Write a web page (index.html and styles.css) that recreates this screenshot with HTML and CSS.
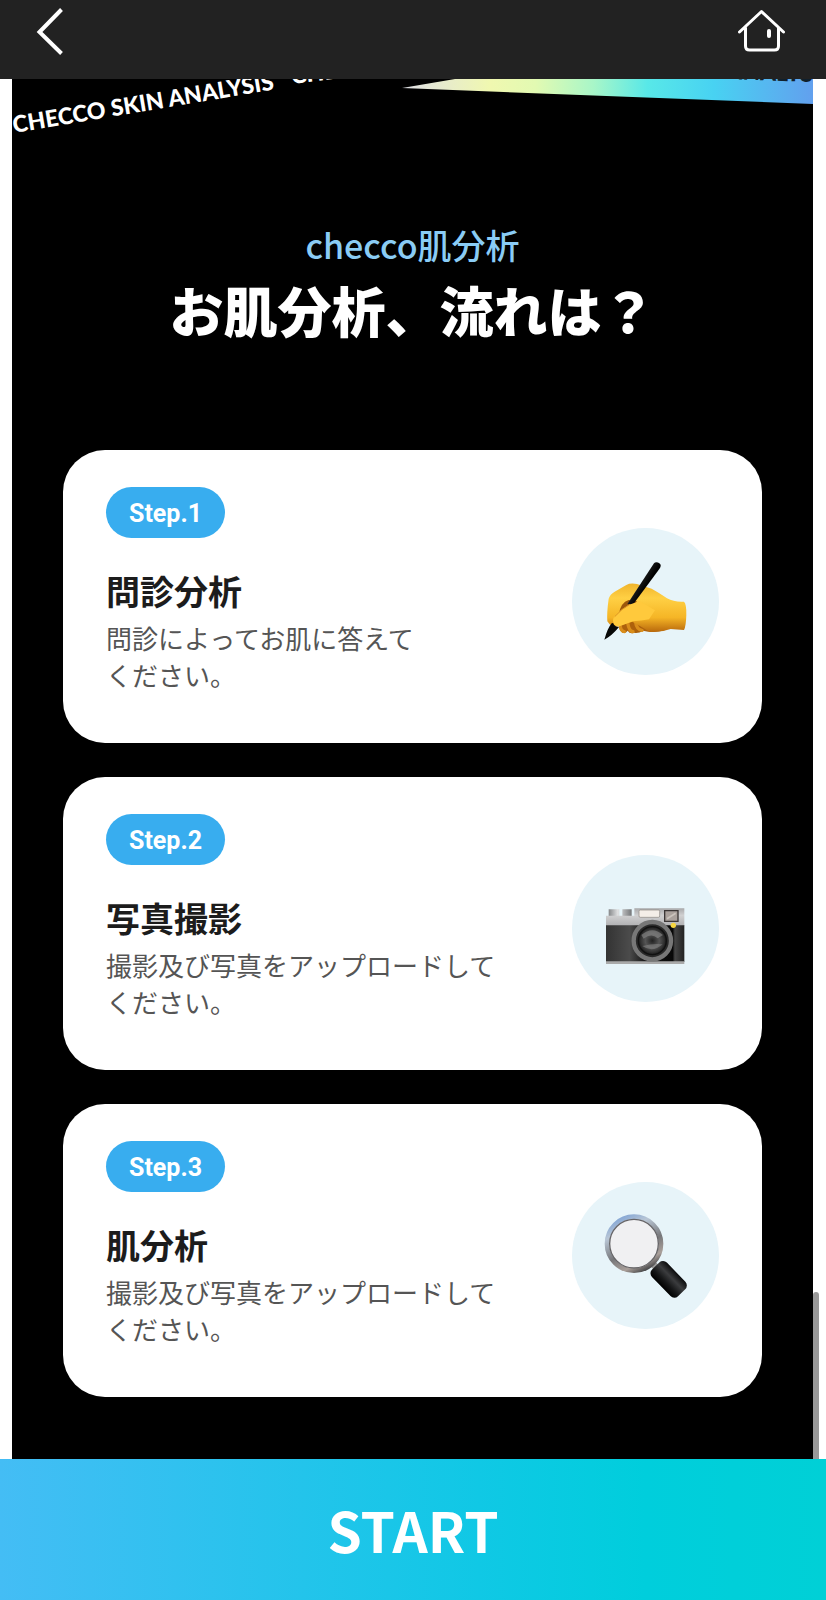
FILE: index.html
```html
<!DOCTYPE html>
<html lang="ja">
<head>
<meta charset="utf-8">
<meta name="viewport" content="width=device-width, initial-scale=1">
<title>checco肌分析</title>
<link rel="stylesheet" href="styles.css">
</head>
<body>
<header class="topbar">
  <button class="icon-button" type="button" aria-label="戻る">
    <svg width="28" height="50" viewBox="0 0 28 50" fill="none" stroke="#fff" stroke-width="4"><path d="M25.500 3.500 3.500 26 25.500 47.500"/></svg>
  </button>
  <a class="icon-button" href="#" aria-label="ホーム">
    <svg width="50" height="50" viewBox="0 0 50 50" fill="none" stroke="#fff" stroke-width="3" stroke-linecap="round" stroke-linejoin="round"><path d="M3.500 26 25.500 5.500 47.500 26M9.500 22v18q0 4 4 4h25q4 0 4-4V22"/><path d="M33 25v5" stroke-width="4"/></svg>
  </a>
</header>

<main class="content">
  <section class="panel">
    <svg class="ribbons" viewBox="0 0 801 60" aria-hidden="true">
      <defs>
        <linearGradient id="band" x1="387" x2="801" y1="0" y2="0" gradientUnits="userSpaceOnUse">
          <stop offset="0" stop-color="#dedee8"/><stop offset=".22" stop-color="#f0f8b0"/><stop offset=".33" stop-color="#e2fab2"/><stop offset=".47" stop-color="#a8f6c8"/><stop offset=".6" stop-color="#58e8e8"/><stop offset=".76" stop-color="#48d2f2"/><stop offset="1" stop-color="#62a0ee"/>
        </linearGradient>
      </defs>
      <path d="M390 9 443 0H801V25Z" fill="url(#band)"/>
      <text class="ribbon-text" fill="#fff" transform="translate(2 54) rotate(-9.500)">CHECCO SKIN ANALYSIS</text>
      <text class="ribbon-text" fill="#fff" transform="translate(280 5) rotate(-7)">CHECCO</text>
      <text class="ribbon-text" fill="#10202c" transform="translate(714 0) rotate(2)">ANALYSIS</text>
    </svg>

    <div class="intro">
      <p class="eyebrow">checco肌分析</p>
      <h1 class="headline">お肌分析、流れは？</h1>
    </div>

    <ol class="steps">
      <li class="card">
        <div class="card-body">
          <span class="badge">Step.1</span>
          <h2 class="card-title">問診分析</h2>
          <p class="card-text">問診によってお肌に答えて<br>ください。</p>
        </div>
        <svg class="picture" viewBox="37 23 441 441" aria-hidden="true">
          <defs>
            <linearGradient id="skin" x1="0" y1="0" x2="0" y2="1"><stop offset="0" stop-color="#f0b42c"/><stop offset=".3" stop-color="#ffd044"/><stop offset=".7" stop-color="#f5b526"/><stop offset="1" stop-color="#b8680c"/></linearGradient>
            <linearGradient id="pen" x1="220" y1="210" x2="245" y2="225" gradientUnits="userSpaceOnUse"><stop offset="0" stop-color="#555"/><stop offset=".35" stop-color="#151515"/><stop offset="1" stop-color="#000"/></linearGradient>
          </defs>
          <path d="M180 290Q172 326 188 337 197 341 204 331 211 342 223 337 236 340 250 331 282 340 315 330L290 280Z" fill="#ad610c"/>
          <path d="M181 315Q184 334 194 334M204 307Q208 333 220 334M227 303Q231 329 247 330" fill="none" stroke="#d98d1a" stroke-width="10" stroke-linecap="round"/>
          <path d="M143 303Q141 278 147 235 151 222 165 214L200 194Q212 187 232 191L276 205Q300 218 322 234 344 246 373 244 381 252 380 284 379 318 373 329 352 327 333 326 303 337 270 335 246 319 218 304L175 318Q155 322 143 303Z" fill="url(#skin)"/>
          <path d="M178 280Q183 247 207 239L232 243 211 268 176 285Z" fill="#9c570c"/>
          <path d="M283 129Q289 122 301 130 306 136 299 146L223 249Q216 254 203 251Z" fill="url(#pen)"/>
          <path d="M208 253Q182 268 165 287 155 300 164 313 172 321 188 315L220 303Q246 302 268 297L286 270 240 243Z" fill="#ffc93c"/>
          <path d="M165 289Q187 264 211 252" stroke="#dc9420" stroke-width="3" fill="none"/>
          <path d="M156 309Q144 323 134 358 156 347 178 320 165 320 160 308Z" fill="#080808"/>
        </svg>
      </li>
      <li class="card">
        <div class="card-body">
          <span class="badge">Step.2</span>
          <h2 class="card-title">写真撮影</h2>
          <p class="card-text">撮影及び写真をアップロードして<br>ください。</p>
        </div>
        <svg class="picture" viewBox="37 27 441 441" aria-hidden="true">
          <defs>
            <linearGradient id="silver" x1="0" y1="0" x2="0" y2="1"><stop offset="0" stop-color="#a9a9ab"/><stop offset=".4" stop-color="#d0d0d1"/><stop offset="1" stop-color="#b0b0b2"/></linearGradient>
            <linearGradient id="knob" x1="0" y1="0" x2="1" y2="0"><stop offset="0" stop-color="#858789"/><stop offset=".4" stop-color="#e0e1e2"/><stop offset="1" stop-color="#747678"/></linearGradient>
            <linearGradient id="leather" x1="0" y1="0" x2="1" y2="0"><stop offset="0" stop-color="#333"/><stop offset=".3" stop-color="#4b4b4b"/><stop offset=".5" stop-color="#151515"/><stop offset=".85" stop-color="#080808"/><stop offset=".88" stop-color="#454545"/><stop offset="1" stop-color="#222"/></linearGradient>
            <radialGradient id="lens"><stop offset="0" stop-color="#222"/><stop offset=".5" stop-color="#555"/><stop offset=".8" stop-color="#353535"/><stop offset="1" stop-color="#1b1b1b"/></radialGradient>
          </defs>
          <path d="M147 190h32v20h-32zM188 190h28v20h-28z" fill="url(#knob)"/>
          <path d="M139 209H224V187H374V240H139Z" fill="url(#silver)"/>
          <path d="M139 238H374V348H139Z" fill="url(#leather)"/>
          <path d="M139 346H374V354H139Z" fill="#aaa"/>
          <rect x="238" y="192" width="62" height="22" rx="4" fill="#f4eee8" stroke="#8b8580" stroke-width="2"/>
          <path d="M315 194h40v32h-40z" fill="#aaa19c" stroke="#3b3635" stroke-width="4"/>
          <path d="M322 218 348 202" stroke="#cbc4bd" stroke-width="5"/>
          <circle cx="278" cy="284" r="56" fill="#292929" stroke="#777" stroke-width="13"/>
          <circle cx="278" cy="284" r="42" fill="url(#lens)" stroke="#111" stroke-width="4"/>
          <path d="M245 267Q278 239 310 267L294 277Q275 260 252 278Z" fill="#858585" opacity=".65"/>
          <path d="M248 300Q282 291 309 295 278 322 248 300Z" fill="#8b8b8b" opacity=".55"/>
          <circle cx="341" cy="238" r="8" fill="#f7d640"/>
        </svg>
      </li>
      <li class="card">
        <div class="card-body">
          <span class="badge">Step.3</span>
          <h2 class="card-title">肌分析</h2>
          <p class="card-text">撮影及び写真をアップロードして<br>ください。</p>
        </div>
        <svg class="picture" viewBox="37 33 441 441" aria-hidden="true">
          <defs>
            <linearGradient id="rim" x1=".2" y1="0" x2=".7" y2="1"><stop offset="0" stop-color="#80a4d5"/><stop offset=".25" stop-color="#b9c6d5"/><stop offset=".6" stop-color="#77777a"/><stop offset=".85" stop-color="#aaa09b"/><stop offset="1" stop-color="#4b4b4d"/></linearGradient>
            <linearGradient id="handle" x1="0" y1="0" x2="0" y2="1"><stop offset="0" stop-color="#0b0b0c"/><stop offset=".35" stop-color="#3b3c3e"/><stop offset=".7" stop-color="#151617"/><stop offset="1" stop-color="#000"/></linearGradient>
          </defs>
          <path d="M276 275 300 300" stroke="#999" stroke-width="20"/>
          <circle cx="223" cy="218" r="81" fill="#eff0f2" stroke="url(#rim)" stroke-width="14"/>
          <circle cx="223" cy="218" r="73" fill="#f0f0f2" stroke="#666568" stroke-width="4"/>
          <rect x="-56" y="-31" width="112" height="62" rx="16" fill="url(#handle)" transform="translate(327 325) rotate(46)"/>
        </svg>
      </li>
    </ol>
  </section>
  <span class="scroll-thumb" aria-hidden="true"></span>
</main>

<button class="start" type="button">START</button>
</body>
</html>
```
FILE: styles.css
```css
* { box-sizing: border-box; }

body {
  margin: 0;
  min-height: 100vh;
  display: flex;
  flex-direction: column;
  background: #fff;
  font-family: "Noto Sans CJK JP", "Noto Sans", sans-serif;
}

h1, h2, p, ol { margin: 0; padding: 0; }

.topbar {
  display: flex;
  justify-content: space-between;
  align-items: flex-start;
  padding: 6px 40px 23px 36px;
  background: #222;
}

.icon-button {
  display: block;
  padding: 0;
  border: 0;
  background: none;
  cursor: pointer;
}

.icon-button svg { display: block; }

.content {
  position: relative;
  flex: 1;
  display: flex;
  padding: 0 13px 0 12px;
}

.panel {
  flex: 1;
  background: #000;
}

.ribbons {
  display: block;
  width: 100%;
  overflow: hidden;
}

.ribbon-text {
  font: 900 23px Lato, sans-serif;
}

.intro {
  padding: 82px 24px 104px;
  text-align: center;
}

.eyebrow {
  color: #8accf5;
  font-size: 34px;
  font-weight: 500;
  line-height: 48px;
}

.headline {
  margin-top: 5px;
  color: #fff;
  font-size: 54px;
  font-weight: 900;
  line-height: 72px;
}

.steps {
  display: grid;
  gap: 34px;
  padding: 0 51px 62px;
  list-style: none;
}

.card {
  display: flex;
  align-items: center;
  justify-content: space-between;
  gap: 24px;
  padding: 37px 43px 28px;
  border-radius: 42px;
  background: #fff;
}

.card-body { padding-bottom: 22px; }

.badge {
  display: block;
  width: fit-content;
  padding: 3px 23px 0;
  border-radius: 26px;
  background: #38adef;
  color: #fff;
  font: bold 25px/48px Roboto, sans-serif;
}

.card-title {
  margin-top: 29px;
  color: #1c1c1c;
  font-size: 34px;
  font-weight: 700;
  line-height: 48px;
}

.card-text {
  margin-top: 4px;
  color: #555;
  font-size: 26px;
  line-height: 37px;
}

.picture {
  flex: none;
  width: 147px;
  border-radius: 50%;
  background: #e7f4f9;
}

.scroll-thumb {
  position: absolute;
  right: 7px;
  bottom: 0;
  width: 6px;
  height: 167px;
  border-radius: 3px 3px 0 0;
  background: #999;
}

.start {
  padding: 30px 24px 31px;
  border: 0;
  background: linear-gradient(90deg, #44bdf5, #10c8e5 58%, #00cedc 78%, #00d0d6);
  color: #fff;
  font: bold 55px/80px "Noto Sans CJK JP", "Noto Sans", sans-serif;
  cursor: pointer;
}
```
